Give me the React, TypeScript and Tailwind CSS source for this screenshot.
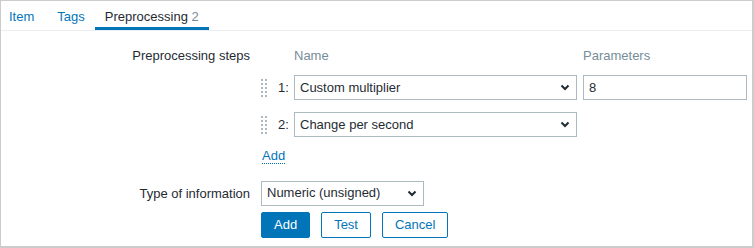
import React from 'react'

function Chevron() {
  return (
    <svg width="10" height="7" viewBox="0 0 10 7" className="shrink-0">
      <path d="M1.5 1.5 L5 5 L8.5 1.5" fill="none" stroke="#1f2c33" strokeWidth="2" />
    </svg>
  )
}

function Handle() {
  return (
    <div className="grid grid-cols-2 gap-x-[2px] gap-y-[2px] w-[6px] mr-[11px]">
      {Array.from({ length: 10 }).map((_, i) => (
        <span key={i} className="w-[2px] h-[2px] bg-[#acbbc2]" />
      ))}
    </div>
  )
}

function Select({ value, width }: { value: string; width: string }) {
  return (
    <div className={`${width} h-[25px] border border-[#acbbc2] bg-white flex items-center justify-between pl-[5px] pr-[6px]`}>
      <span>{value}</span>
      <Chevron />
    </div>
  )
}

const steps = [
  { n: 1, name: 'Custom multiplier', param: '8' },
  { n: 2, name: 'Change per second', param: null },
]

export default function App() {
  return (
    <div
      className="w-[754px] h-[248px] bg-white border border-[#cccccc] border-r-2 border-b-2 text-[13px] text-[#1f2c33] overflow-hidden"
      style={{ fontFamily: '"Liberation Sans", Arial, sans-serif' }}
    >
      {/* tabs */}
      <div className="flex h-[30px] border-b border-[#ebeef0] pl-[8px]">
        <div className="text-[#0275b8] pt-[6px] mr-[23px]">Item</div>
        <div className="text-[#0275b8] pt-[6px] mr-[10px]">Tags</div>
        <div className="relative pt-[6px] px-[10px]">
          Preprocessing <span className="text-[#768d99]">2</span>
          <span className="absolute left-0 right-0 bottom-0 h-[3px] bg-[#0275b8]" />
        </div>
      </div>

      {/* form */}
      <div className="grid grid-cols-[249px_1fr] gap-x-[11px] pt-[14px]">
        <div className="text-right pt-[1px]">Preprocessing steps</div>
        <div>
          <div className="flex text-[#768d99] h-[21px] pt-[1px]">
            <span className="ml-[33px] w-[289px]">Name</span>
            <span>Parameters</span>
          </div>
          <div className="flex flex-col gap-[12px] mt-[9px]">
            {steps.map(s => (
              <div key={s.n} className="flex items-center h-[25px]">
                <Handle />
                <span className="w-[16px]">{s.n}:</span>
                <Select value={s.name} width="w-[283px]" />
                {s.param !== null && (
                  <div className="ml-[6px] w-[164px] h-[25px] border border-[#acbbc2] pl-[5px] flex items-center">
                    {s.param}
                  </div>
                )}
              </div>
            ))}
          </div>
          <div className="mt-[9px] ml-[1px]">
            <span className="text-[#0275b8] border-b border-dotted border-[#0275b8]">Add</span>
          </div>
        </div>

        <div className="text-right pt-[3px] mt-[15px]">Type of information</div>
        <div className="mt-[15px]">
          <Select value="Numeric (unsigned)" width="w-[163px]" />
          <div className="flex gap-[11px] mt-[6px]">
            <button className="h-[26px] px-[12px] rounded-[2px] bg-[#0275b8] text-white border border-[#0275b8]">Add</button>
            <button className="h-[26px] px-[12px] rounded-[2px] bg-white text-[#0275b8] border border-[#0275b8]">Test</button>
            <button className="h-[26px] px-[12px] rounded-[2px] bg-white text-[#0275b8] border border-[#0275b8]">Cancel</button>
          </div>
        </div>
      </div>
    </div>
  )
}
